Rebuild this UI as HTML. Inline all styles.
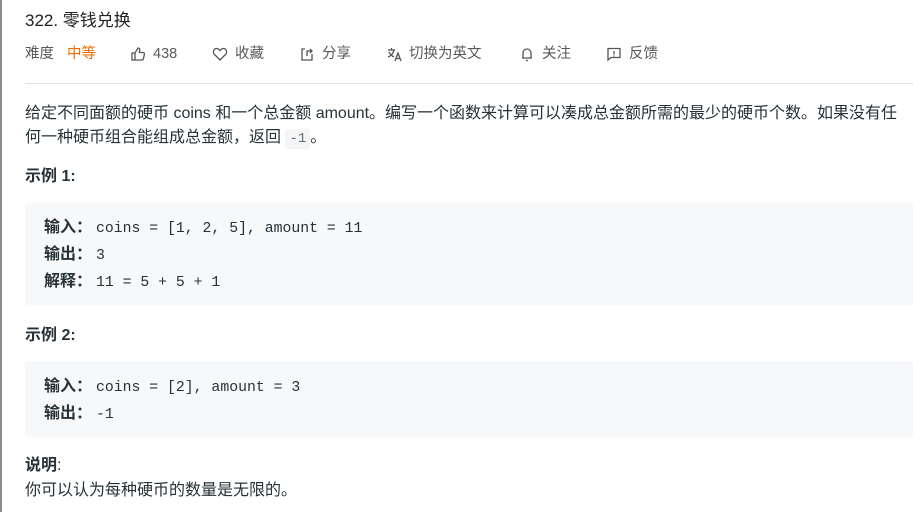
<!DOCTYPE html><html><head><meta charset="utf-8"><style>
body{margin:0;width:913px;height:512px;overflow:hidden;background:#fff;font-family:"Liberation Sans","Noto Sans CJK SC",sans-serif;color:#263238;position:relative}
.lb{position:absolute;left:0;top:0;width:2px;height:512px;background:#8a8a8a}
.a{position:absolute;white-space:nowrap}
.t{left:25px;top:10px;font-size:17px;line-height:22px;color:#212121}
.m{top:44px;font-size:14.5px;line-height:20px;color:#595959;display:flex;align-items:center;gap:7px}
.m svg{width:16px;height:16px;stroke:#555;fill:none;stroke-width:1.3}
.hr{position:absolute;left:25px;right:0;top:83px;height:1px;background:#e4e4e4}
p{margin:0}
.pp{left:25px;top:102px;font-size:16px;line-height:24px;color:#263238}
.ic{font-family:"Liberation Mono",monospace;font-size:14px;background:#f5f5f5;padding:2px 4px;border-radius:3px;color:#546e7a}
.h{left:25px;font-size:16px;line-height:20px;font-weight:bold;color:#263238}
.box{position:absolute;left:25px;right:0;background:#f7f8fa;border-radius:3px;padding:0 19px;box-sizing:border-box;font-family:"Liberation Mono","Noto Sans CJK SC",monospace;font-size:14.8px;line-height:26px;color:#263238}
.box b{font-family:"Liberation Sans","Noto Sans CJK SC",sans-serif;font-size:16px;display:inline-block;width:52px}
</style></head><body><div class="lb"></div>
<div class="a t">322. 零钱兑换</div>
<div class="a m" style="left:25px">难度 <span style="color:#ef6c00;margin-left:6px">中等</span></div>
<div class="a m" style="left:130px"><svg viewBox="0 0 16 16"><path d="M2 7h3v7H2zM5 7l3-5c1.5 0 2 1 1.7 2.5L9.3 6.5H13c1 0 1.6.8 1.4 1.8l-1 4.5c-.2.8-.8 1.2-1.6 1.2H5"/></svg>438</div>
<div class="a m" style="left:212px"><svg viewBox="0 0 16 16"><path d="M8 14L2.5 8.5C0.5 6.5 1.5 2.5 4.6 2.5 6.3 2.5 7.3 3.6 8 4.6 8.7 3.6 9.7 2.5 11.4 2.5c3.1 0 4.1 4 2.1 6z"/></svg>收藏</div>
<div class="a m" style="left:299px"><svg viewBox="0 0 16 16"><path d="M6 3H3v11h10V8M8 10V5h5M11 3l2 2-2 2"/></svg>分享</div>
<div class="a m" style="left:386px"><svg viewBox="0 0 16 16"><path d="M2 4h7M5.5 2v2M3 6c1.5 3 3 4 5 5M8 4c-1 4-3 6-6 7M9 15l3-8 3 8M10 12.5h4"/></svg>切换为英文</div>
<div class="a m" style="left:519px"><svg viewBox="0 0 16 16"><path d="M4 12V7a4 4 0 018 0v5zM3 12h10M7 14.5h2"/></svg>关注</div>
<div class="a m" style="left:606px"><svg viewBox="0 0 16 16"><path d="M2 2.5h12v9H5l-3 2.5zM8 5v3.5M8 9.5v1"/></svg>反馈</div>
<div class="hr"></div>
<div class="a pp"><p>给定不同面额的硬币 coins 和一个总金额 amount。编写一个函数来计算可以凑成总金额所需的最少的硬币个数。如果没有任</p><p>何一种硬币组合能组成总金额，返回 <span class="ic">-1</span>。</p></div>
<div class="a h" style="top:167px">示例 1:</div>
<div class="box" style="top:203px;height:102px;padding-top:12px"><div><b>输入：</b>coins = [1, 2, 5], amount = 11</div><div><b>输出：</b>3</div><div><b>解释：</b>11 = 5 + 5 + 1</div></div>
<div class="a h" style="top:326px">示例 2:</div>
<div class="box" style="top:361px;height:76px;padding-top:13px"><div><b>输入：</b>coins = [2], amount = 3</div><div><b>输出：</b>-1</div></div>
<div class="a h" style="top:456px">说明<span style="font-weight:normal">:</span></div>
<div class="a" style="left:25px;top:481px;font-size:16px;line-height:20px">你可以认为每种硬币的数量是无限的。</div>
</body></html>
